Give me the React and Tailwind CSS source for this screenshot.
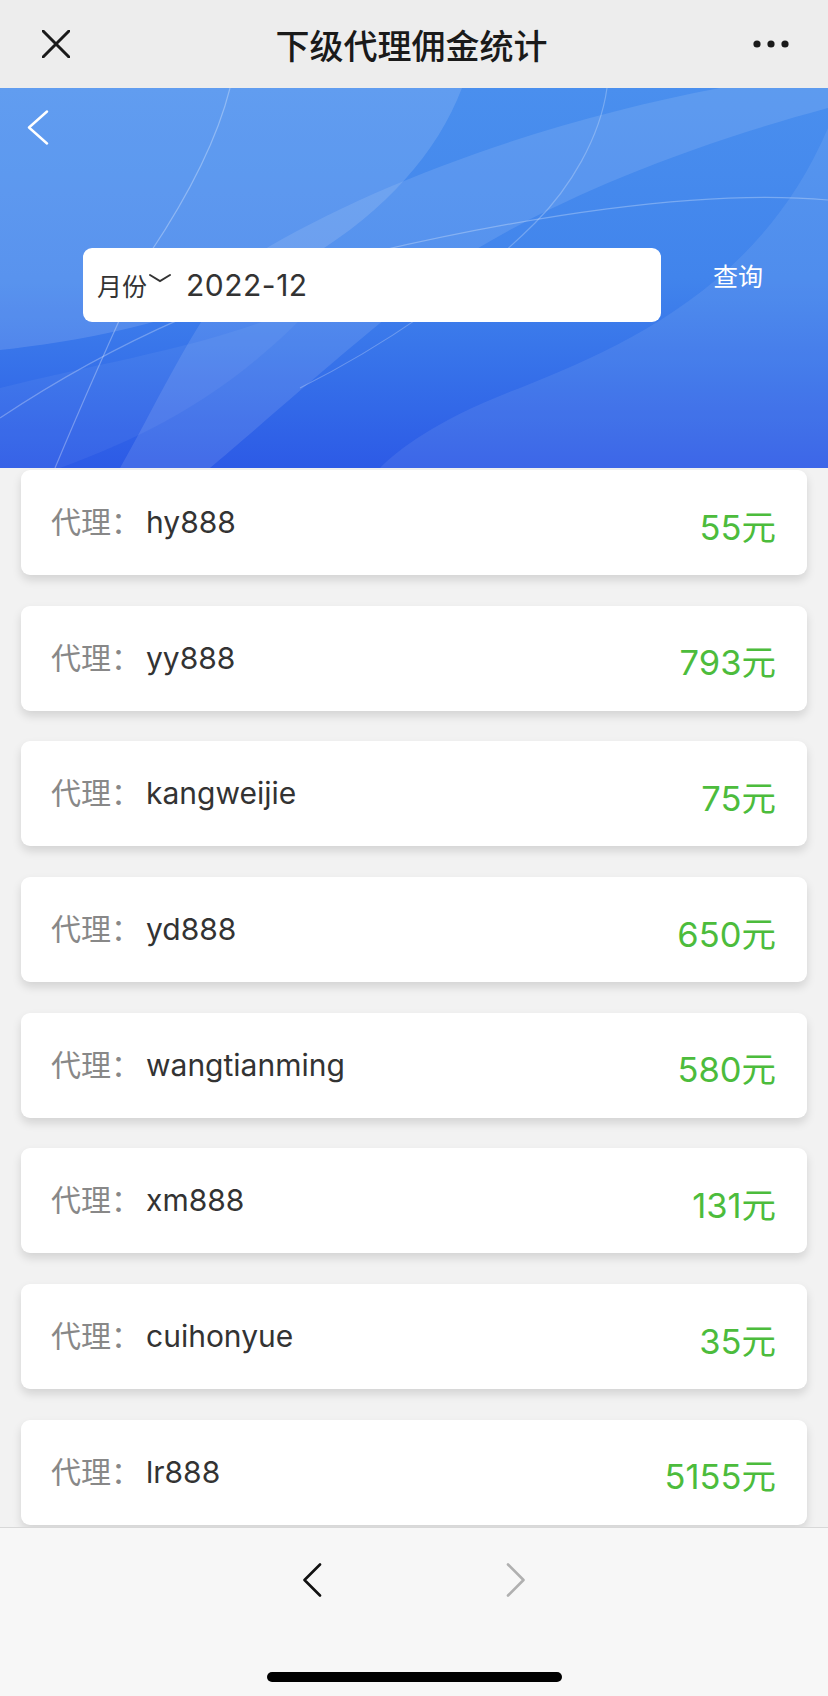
import React from 'react';

const agents = [
    { name: 'hy888', amount: 55 },
    { name: 'yy888', amount: 793 },
    { name: 'kangweijie', amount: 75 },
    { name: 'yd888', amount: 650 },
    { name: 'wangtianming', amount: 580 },
    { name: 'xm888', amount: 131 },
    { name: 'cuihonyue', amount: 35 },
    { name: 'lr888', amount: 5155 },
];

// background waves of the blue banner
const BannerWaves = () => (
    <svg className="absolute inset-0 w-full h-full" viewBox="0 0 828 380" preserveAspectRatio="none">
        <path d="M0 0 H462 C420 110 300 200 130 240 C80 252 36 258 0 262 Z" fill="#ffffff" fillOpacity="0.13" />
        <path d="M250 170 C380 90 560 30 720 0 H828 V20 C680 60 560 110 470 165 C380 230 270 330 210 380 H120 C160 310 200 220 250 170 Z" fill="#ffffff" fillOpacity="0.11" />
        <path d="M828 40 C760 200 620 260 520 300 C440 330 400 360 380 380 H828 Z" fill="#ffffff" fillOpacity="0.08" />
        <path d="M0 300 C120 270 260 250 330 200 C250 290 170 340 60 380 H0 Z" fill="#ffffff" fillOpacity="0.05" />
        <path d="M230 0 C215 60 180 120 150 165 C120 230 80 320 55 380" stroke="#ffffff" strokeOpacity="0.3" strokeWidth="1.2" fill="none" />
        <path d="M607 0 C600 50 570 100 535 135 C470 200 380 260 300 300" stroke="#ffffff" strokeOpacity="0.25" strokeWidth="1.2" fill="none" />
        <path d="M828 112 C700 100 520 130 370 165 C240 200 120 250 0 330" stroke="#ffffff" strokeOpacity="0.28" strokeWidth="1.2" fill="none" />
    </svg>
);

const App = () => {
    return (
        <div className="w-[828px] h-[1696px] overflow-hidden flex flex-col bg-[#f2f2f2] font-[Inter,'Noto_Sans_CJK_SC',sans-serif]">
            {/* top bar */}
            <div className="h-[88px] shrink-0 bg-[#ededed] flex items-center justify-between px-[42px]">
                <svg width="28" height="28" viewBox="0 0 28 28">
                    <path d="M1 1 L27 27 M27 1 L1 27" stroke="#1a1a1a" strokeWidth="3" strokeLinecap="round" />
                </svg>
                <h1 className="text-[34px] font-medium text-[#1a1a1a] font-['Noto_Sans_CJK_SC',sans-serif]">下级代理佣金统计</h1>
                <svg width="36" height="8" viewBox="0 0 36 8" className="-mr-[3px]">
                    <circle cx="4" cy="4" r="3.6" fill="#1a1a1a" />
                    <circle cx="18" cy="4" r="3.6" fill="#1a1a1a" />
                    <circle cx="32" cy="4" r="3.6" fill="#1a1a1a" />
                </svg>
            </div>

            {/* banner */}
            <div className="relative h-[380px] shrink-0 bg-gradient-to-b from-[#4a8fee] via-[#4184ec] to-[#2d5ae6] overflow-hidden">
                <BannerWaves />
                <div className="relative pl-[27px] pt-[22px]">
                    <svg width="22" height="35" viewBox="0 0 22 35">
                        <path d="M20 1.5 L2 17.5 L20 33.5" stroke="#ffffff" strokeWidth="2.4" fill="none" strokeLinecap="round" strokeLinejoin="round" />
                    </svg>
                </div>
                <div className="relative flex items-center mt-[103px]">
                    <div className="ml-[83px] w-[578px] h-[74px] bg-white rounded-[9px] flex items-center pl-[14px]">
                        <span className="text-[25px] text-[#333] mt-[6px]">月份</span>
                        <svg width="24" height="12" viewBox="0 0 24 12" className="ml-[1px] -mt-[14px]">
                            <path d="M2 3 L12 9 L22 3" stroke="#333" strokeWidth="2" fill="none" strokeLinecap="round" />
                        </svg>
                        <span className="ml-[14px] text-[30px] text-[#333] tracking-[0.5px]">2022-12</span>
                    </div>
                    <span className="ml-[52px] text-[25px] text-white -mt-[14px]">查询</span>
                </div>
            </div>

            {/* list */}
            <div className="flex-1 overflow-hidden px-[21px] pt-[2px] flex flex-col gap-[30.7px]">
                {agents.map((a) => (
                    <div
                        key={a.name}
                        className="h-[105px] shrink-0 bg-white rounded-[9px] shadow-[0_5px_10px_rgba(0,0,0,0.13)] flex items-center justify-between pl-[30px] pr-[31px]"
                    >
                        <div className="flex items-center">
                            <span className="text-[30px] text-[#888]">代理：</span>
                            <span className="ml-[5px] text-[30px] text-[#333]">{a.name}</span>
                        </div>
                        <span className="text-[34.5px] text-[#4cbc3c] mt-[10px]">{a.amount}元</span>
                    </div>
                ))}
            </div>

            {/* bottom bar */}
            <div className="h-[169px] shrink-0 bg-[#f7f7f7] border-t border-[#d8d8d8] flex flex-col items-center">
                <div className="flex justify-center gap-[184px] pt-[35px]">
                    <svg width="20" height="34" viewBox="0 0 20 34">
                        <path d="M18 1.5 L2.5 17 L18 32.5" stroke="#111" strokeWidth="2.6" fill="none" strokeLinecap="round" strokeLinejoin="round" />
                    </svg>
                    <svg width="20" height="34" viewBox="0 0 20 34">
                        <path d="M2 1.5 L17.5 17 L2 32.5" stroke="#b0b0b0" strokeWidth="2.6" fill="none" strokeLinecap="round" strokeLinejoin="round" />
                    </svg>
                </div>
                <div className="mt-[75px] w-[295px] h-[10px] rounded-full bg-black" />
            </div>
        </div>
    );
};

export default App;
